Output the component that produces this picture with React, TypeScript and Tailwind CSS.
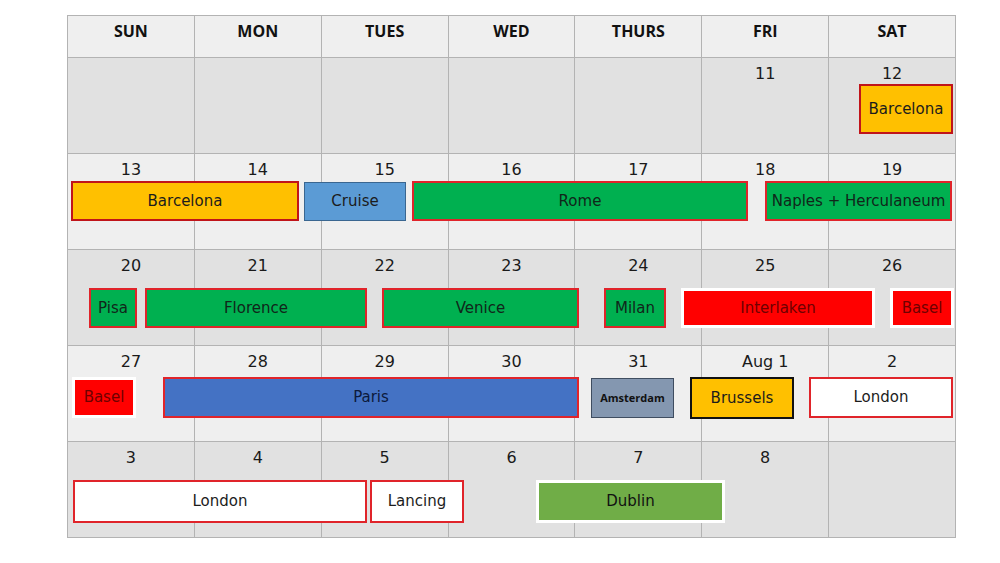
const days = ["SUN", "MON", "TUES", "WED", "THURS", "FRI", "SAT"];

type Ev = {
  label: string;
  left: number;
  width: number;
  top: number;
  height: number;
  style: string;
};

const yellowRed = "bg-[#ffc000] border-2 border-[#c0141a] text-[#1c1c1c] text-[15px]";
const greenRed = "bg-[#00b050] border-2 border-[#e0242a] text-[#10261a] text-[15px]";
const redWhite = "bg-[#ff0000] border-[3px] border-white text-[#6e0000] text-[15px]";
const whiteRed = "bg-white border-2 border-[#e0242a] text-[#1c1c1c] text-[15px]";

const weeks: { bg: string; nums: string[]; events: Ev[] }[] = [
  {
    bg: "bg-[#e1e1e1]",
    nums: ["", "", "", "", "", "11", "12"],
    events: [{ label: "Barcelona", left: 791, width: 94, top: 26, height: 50, style: yellowRed }],
  },
  {
    bg: "bg-[#efefef]",
    nums: ["13", "14", "15", "16", "17", "18", "19"],
    events: [
      { label: "Barcelona", left: 3, width: 228, top: 27, height: 40, style: yellowRed },
      { label: "Cruise", left: 236, width: 102, top: 28, height: 39, style: "bg-[#5b9bd5] border border-[#3a6690] text-[#1c1c1c] text-[15px]" },
      { label: "Rome", left: 344, width: 336, top: 27, height: 40, style: greenRed },
      { label: "Naples + Herculaneum", left: 697, width: 187, top: 27, height: 40, style: greenRed },
    ],
  },
  {
    bg: "bg-[#e1e1e1]",
    nums: ["20", "21", "22", "23", "24", "25", "26"],
    events: [
      { label: "Pisa", left: 21, width: 48, top: 38, height: 40, style: greenRed },
      { label: "Florence", left: 77, width: 222, top: 38, height: 40, style: greenRed },
      { label: "Venice", left: 314, width: 197, top: 38, height: 40, style: greenRed },
      { label: "Milan", left: 536, width: 62, top: 38, height: 40, style: greenRed },
      { label: "Interlaken", left: 613, width: 194, top: 38, height: 40, style: redWhite },
      { label: "Basel", left: 822, width: 64, top: 38, height: 40, style: redWhite },
    ],
  },
  {
    bg: "bg-[#efefef]",
    nums: ["27", "28", "29", "30", "31", "Aug 1", "2"],
    events: [
      { label: "Basel", left: 4, width: 64, top: 31, height: 41, style: redWhite },
      { label: "Paris", left: 95, width: 416, top: 31, height: 41, style: "bg-[#4472c4] border-2 border-[#e0242a] text-[#0c1a3c] text-[15px]" },
      { label: "Amsterdam", left: 523, width: 83, top: 32, height: 40, style: "bg-[#8497b0] border border-[#3f4d60] text-[#111] text-[11px] font-bold font-['Open_Sans',sans-serif]" },
      { label: "Brussels", left: 622, width: 104, top: 31, height: 42, style: "bg-[#ffc000] border-2 border-[#111] text-[#1c1c1c] text-[15px]" },
      { label: "London", left: 741, width: 144, top: 31, height: 41, style: whiteRed },
    ],
  },
  {
    bg: "bg-[#e1e1e1]",
    nums: ["3", "4", "5", "6", "7", "8", ""],
    events: [
      { label: "London", left: 5, width: 294, top: 38, height: 43, style: whiteRed },
      { label: "Lancing", left: 302, width: 94, top: 38, height: 43, style: whiteRed },
      { label: "Dublin", left: 468, width: 189, top: 38, height: 43, style: "bg-[#70ad47] border-[3px] border-white text-[#111] text-[15px]" },
    ],
  },
];

export default function App() {
  return (
    <main className="w-[1000px] h-[563px] bg-white pt-[15px] pl-[67px] font-['DejaVu_Sans',sans-serif]">
      <div className="w-[889px] border-l border-t border-[#b3b3b3]">
        {/* Header */}
        <div className="grid grid-cols-7 h-[42px] bg-[#efefef]">
          {days.map((d) => (
            <div
              key={d}
              className="border-r border-b border-[#b3b3b3] flex justify-center pt-[3px] font-['Open_Sans',sans-serif] font-bold text-[16px] text-[#111]"
            >
              {d}
            </div>
          ))}
        </div>

        {/* Weeks */}
        {weeks.map((w, wi) => (
          <div key={wi} className={`relative h-[96px] ${w.bg}`}>
            <div className="grid grid-cols-7 h-full">
              {w.nums.map((n, i) => (
                <div
                  key={i}
                  className="border-r border-b border-[#b3b3b3] flex justify-center pt-[4px] text-[16px] text-[#1a1a1a]"
                >
                  {n}
                </div>
              ))}
            </div>
            {w.events.map((e, ei) => (
              <div
                key={ei}
                className={`absolute flex items-center justify-center whitespace-nowrap ${e.style}`}
                style={{ left: e.left, top: e.top, width: e.width, height: e.height }}
              >
                {e.label}
              </div>
            ))}
          </div>
        ))}
      </div>
    </main>
  );
}
